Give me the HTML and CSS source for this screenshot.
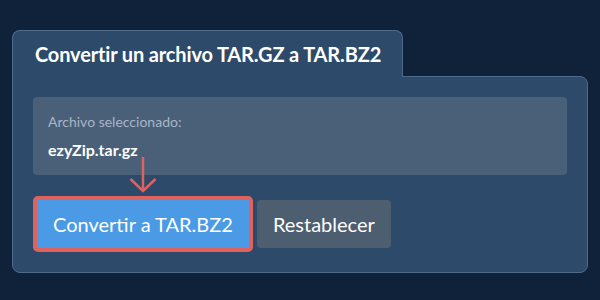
FILE: index.html
```html
<!DOCTYPE html>
<html lang="es">
<head>
  <meta charset="UTF-8">
  <meta name="viewport" content="width=device-width, initial-scale=1.0">
  <title>Convertir TAR.GZ a TAR.BZ2</title>
  <link rel="stylesheet" href="styles.css">
</head>
<body>
  <div class="converter">
    <!-- Tab header -->
    <div class="tab">
      <h2>Convertir un archivo TAR.GZ a TAR.BZ2</h2>
    </div>

    <!-- Panel -->
    <div class="panel">
      <div class="file-box">
        <div class="file-label">Archivo seleccionado:</div>
        <div class="file-name">ezyZip.tar.gz</div>
      </div>

      <div class="actions">
        <div class="highlight">
          <span class="arrow">
            <svg width="28" height="36" viewBox="0 0 28 36">
              <path d="M14 0 V34 M1.5 22 L14 34 L26.5 22" fill="none" stroke="#e0625e" stroke-width="2.5"/>
            </svg>
          </span>
          <button class="btn btn-convert">Convertir a TAR.BZ2</button>
        </div>
        <button class="btn btn-reset">Restablecer</button>
      </div>
    </div>
  </div>
</body>
</html>
```

FILE: styles.css
```css
body {
  margin: 0;
  background-color: #10223a;
  font-family: Lato, "Open Sans", sans-serif;
}
.converter {
  padding: 30px 12px 0 12px;
}
.tab {
  position: relative;
  z-index: 1;
  display: inline-block;
  margin-bottom: -1px;
  padding: 0 21px 0 22px;
  height: 46px;
  background-color: #2d4a6a;
  border: 1px solid #4f6b8b;
  border-bottom: none;
  border-radius: 8px 8px 0 0;
}
.tab h2 {
  margin: 0;
  line-height: 46px;
  font-size: 20px;
  font-weight: bold;
  letter-spacing: -0.15px;
  color: #ffffff;
}
.panel {
  padding: 20px;
  background-color: #2d4a6a;
  border: 1px solid #4f6b8b;
  border-radius: 0 8px 8px 8px;
}
.file-box {
  height: 78px;
  box-sizing: border-box;
  padding: 16px 15px;
  background-color: #4a6079;
  border-radius: 4px;
}
.file-label {
  font-size: 14px;
  line-height: 18px;
  color: #a9b6c5;
}
.file-name {
  margin-top: 9px;
  font-size: 16px;
  font-weight: bold;
  line-height: 20px;
  color: #ffffff;
}
.actions {
  display: flex;
  align-items: center;
  gap: 4px;
  margin-top: 21px;
}
.highlight {
  position: relative;
  display: flex;
}
.arrow {
  position: absolute;
  left: 50%;
  top: -39px;
  margin-left: -14px;
  line-height: 0;
}
.btn {
  height: 48px;
  padding: 0 16px;
  border: none;
  border-radius: 4px;
  color: #ffffff;
  font-family: Lato, "Open Sans", sans-serif;
  font-size: 20px;
  cursor: pointer;
}
.btn-convert {
  box-sizing: content-box;
  background-color: #4a9ae6;
  border: 4px solid #e0625e;
  border-radius: 5px;
}
.btn-reset {
  background-color: #4d5e70;
}
```
